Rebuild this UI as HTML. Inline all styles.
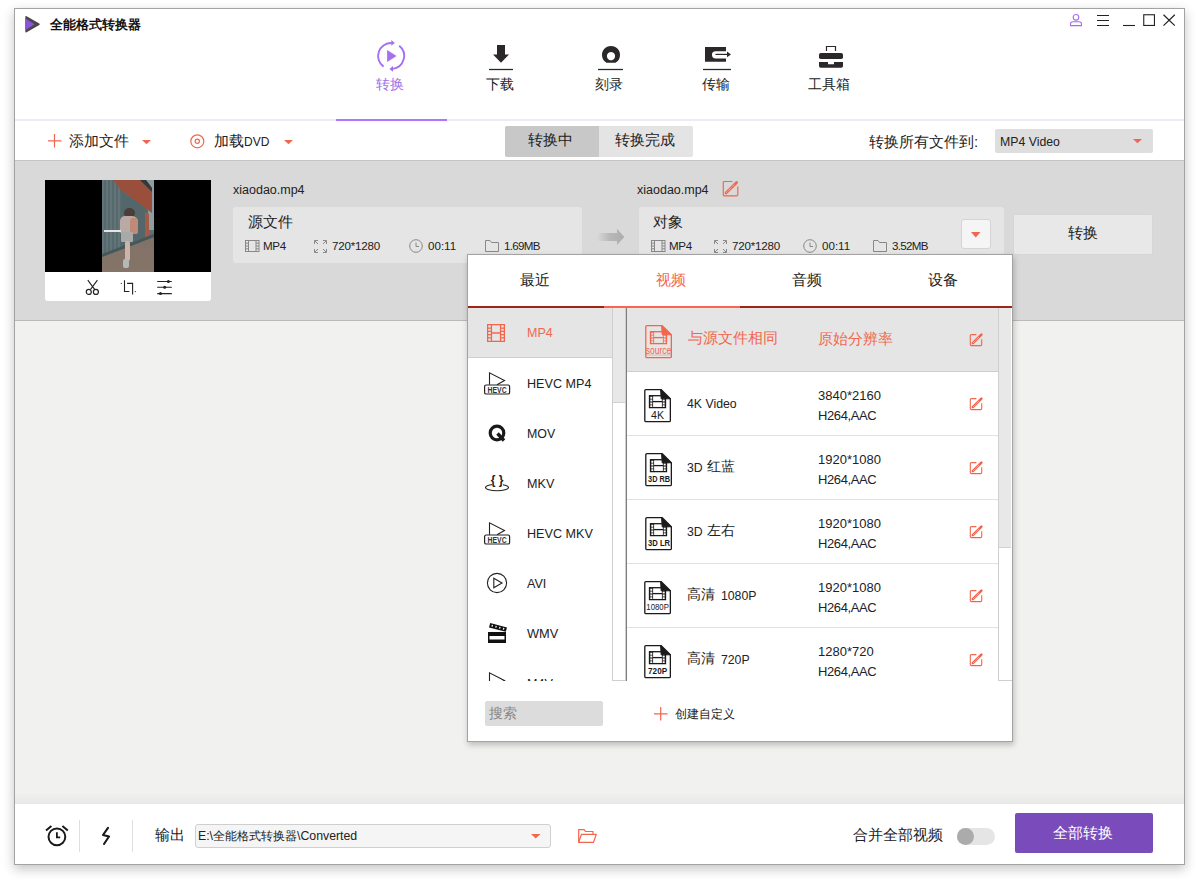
<!DOCTYPE html>
<html><head><meta charset="utf-8">
<style>
*{box-sizing:border-box;margin:0;padding:0}
html,body{width:1199px;height:888px;background:#fff;overflow:hidden;font-family:"Liberation Sans",sans-serif;color:#222}
.a{position:absolute}
.t{position:absolute;white-space:nowrap;line-height:1}
svg{position:absolute;overflow:visible}
</style></head><body>
<!-- window -->
<div class="a" style="left:14px;top:8px;width:1171px;height:857px;border:1px solid #a3a3a3;background:#fff;box-shadow:0 4px 11px rgba(0,0,0,.24)"></div>

<!-- title -->
<svg style="left:24px;top:15px" width="18" height="19" viewBox="0 0 18 19">
  <path d="M2.6 1.3 L15.3 8.6 Q16.3 9.3 15.3 10 L2.6 17.3 Q1.3 18 1.3 16.6 V2 Q1.3 0.6 2.6 1.3 Z" fill="#4a4748"/>
  <path d="M1.3 3.4 L10.6 9.3 L1.3 15.2 Z" fill="#8b54d8"/>
</svg>
<div class="t" style="left:50px;top:19px;font-size:12.5px;font-weight:bold;color:#111">全能格式转换器</div>

<!-- window controls -->
<svg style="left:1069px;top:13px" width="14" height="14" viewBox="0 0 14 14">
  <circle cx="7" cy="4.3" r="2.8" fill="none" stroke="#a56cf0" stroke-width="1.1"/>
  <path d="M1.5 12.6 V10.8 Q1.5 8.7 3.8 8.7 H10.2 Q12.5 8.7 12.5 10.8 V12.6 Z" fill="none" stroke="#a56cf0" stroke-width="1.1"/>
</svg>
<svg style="left:1096px;top:14px" width="14" height="13" viewBox="0 0 14 13">
  <path d="M1 1.5 H13 M1 6.5 H13 M1 11.5 H13" stroke="#222" stroke-width="1.1"/>
</svg>
<svg style="left:1122px;top:14px" width="14" height="13" viewBox="0 0 14 13">
  <path d="M1 11.5 H13" stroke="#222" stroke-width="1.1"/>
</svg>
<svg style="left:1143px;top:14px" width="13" height="13" viewBox="0 0 13 13">
  <rect x="0.75" y="0.75" width="10.7" height="10.7" fill="none" stroke="#222" stroke-width="1.1"/>
</svg>
<svg style="left:1162px;top:14px" width="14" height="13" viewBox="0 0 14 13">
  <path d="M1.5 0.8 L12.8 11.6 M12.8 0.8 L1.5 11.6" stroke="#222" stroke-width="1.2"/>
</svg>

<!-- nav icons -->
<svg style="left:376px;top:40px" width="30" height="33" viewBox="0 0 30 33">
  <path d="M7.6 26.6 A13 13 0 0 1 15.8 3" fill="none" stroke="#a56ff0" stroke-width="1.9"/>
  <path d="M15.3 0 L18.8 2.9 L15.3 5.8 Z" fill="#a56ff0"/>
  <path d="M23.2 5.8 A13 13 0 0 1 16.5 28.9" fill="none" stroke="#a56ff0" stroke-width="1.9"/>
  <path d="M17 26 L13.4 28.9 L17 31.8 Z" fill="#a56ff0"/>
  <path d="M11.1 10.1 L20.6 16.05 L11.1 22 Z" fill="#a56ff0"/>
</svg>
<div class="t" style="left:376px;top:77px;font-size:14px;color:#a06fe6">转换</div>

<svg style="left:489px;top:44px" width="25" height="27" viewBox="0 0 25 27">
  <path d="M8 1 H16 V10.4 H20 L12 18.7 L4 10.4 H8 Z" fill="#2b2829"/>
  <path d="M0 25.5 H24" stroke="#2b2829" stroke-width="1.3"/>
</svg>
<div class="t" style="left:486px;top:77px;font-size:14px;color:#222">下载</div>

<svg style="left:598px;top:44px" width="25" height="27" viewBox="0 0 25 27">
  <path d="M8.5 18.7 A9 9 0 1 1 17.5 18.7 Z M13 8 A4.1 4.1 0 1 0 13.01 8 Z" fill="#2b2829" fill-rule="evenodd"/>
  <path d="M0 25.5 H25" stroke="#2b2829" stroke-width="1.3"/>
</svg>
<div class="t" style="left:595px;top:77px;font-size:14px;color:#222">刻录</div>

<svg style="left:703px;top:44px" width="29" height="27" viewBox="0 0 29 27">
  <path d="M2 3 H23 V7.2 H12.6 A3.65 3.65 0 0 0 12.6 14.5 H23 V17.7 H2 Z" fill="#2b2829"/>
  <path d="M12.5 10.4 H25" stroke="#2b2829" stroke-width="1.2"/>
  <path d="M24 7.6 L28 10.4 L24 13.2 Z" fill="#2b2829"/>
  <path d="M0 25.5 H28" stroke="#2b2829" stroke-width="1.3"/>
</svg>
<div class="t" style="left:702px;top:77px;font-size:14px;color:#222">传输</div>

<svg style="left:818px;top:45px" width="26" height="24" viewBox="0 0 26 24">
  <path d="M8.5 6 V1.5 H17.5 V6" fill="none" stroke="#2b2829" stroke-width="1.2"/>
  <rect x="1" y="8" width="24" height="6" rx="1.8" fill="#2b2829"/>
  <path d="M1 17 H10 V19.3 H16 V17 H25 V21 A1.8 1.8 0 0 1 23.2 22.8 H2.8 A1.8 1.8 0 0 1 1 21 Z" fill="#2b2829"/>
</svg>
<div class="t" style="left:808px;top:77px;font-size:14px;color:#222">工具箱</div>
<!-- toolbar -->
<svg style="left:48px;top:134px" width="14" height="14" viewBox="0 0 14 14">
  <path d="M6.5 0 V13.5 M0 6.8 H13.5" stroke="#f2664e" stroke-width="1.2"/>
</svg>
<div class="t" style="left:69px;top:133px;font-size:15px;color:#222">添加文件</div>
<svg style="left:142px;top:140px" width="10" height="5" viewBox="0 0 10 5"><path d="M0 0 H9 L4.5 4.2 Z" fill="#f2664e"/></svg>
<svg style="left:190px;top:134px" width="15" height="15" viewBox="0 0 15 15">
  <circle cx="7.3" cy="7.3" r="6.5" fill="none" stroke="#f2664e" stroke-width="1.2"/>
  <circle cx="7.3" cy="7.3" r="2.1" fill="none" stroke="#f2664e" stroke-width="1.2"/>
</svg>
<div class="t" style="left:214px;top:133px;font-size:15px;color:#222">加载<span style="font-size:12px">DVD</span></div>
<svg style="left:284px;top:140px" width="10" height="5" viewBox="0 0 10 5"><path d="M0 0 H9 L4.5 4.2 Z" fill="#f2664e"/></svg>

<div class="a" style="left:505px;top:126px;width:188px;height:31px;border-radius:2px;background:#e4e4e4"></div>
<div class="a" style="left:505px;top:126px;width:94px;height:31px;border-radius:2px 0 0 2px;background:#c8c8c8"></div>
<div class="t" style="left:528px;top:133px;font-size:14.5px;color:#222">转换中</div>
<div class="t" style="left:615px;top:133px;font-size:14.5px;color:#222">转换完成</div>

<div class="t" style="left:869px;top:134px;font-size:15px;color:#222">转换所有文件到:</div>
<div class="a" style="left:995px;top:129px;width:158px;height:24px;border-radius:2px;background:#dedede"></div>
<div class="t" style="left:1000px;top:136px;font-size:12.3px;color:#222">MP4 Video</div>
<svg style="left:1133px;top:139px" width="10" height="5" viewBox="0 0 10 5"><path d="M0 0 H9 L4.5 4.2 Z" fill="#f2664e"/></svg>

<!-- nav lines -->
<div class="a" style="left:15px;top:119px;width:1169px;height:2px;background:#efe9f8"></div>
<div class="a" style="left:336px;top:119px;width:111px;height:2px;background:#ad76fb"></div>

<!-- file row -->
<div class="a" style="left:15px;top:160px;width:1169px;height:1px;background:#c4c4c4"></div>
<div class="a" style="left:15px;top:161px;width:1169px;height:159px;background:#d9d9d9"></div>
<div class="a" style="left:15px;top:320px;width:1169px;height:1px;background:#b9b9b9"></div>
<!-- thumbnail -->
<div class="a" style="left:45px;top:180px;width:166px;height:121px;background:#fff;border-radius:0 0 3px 3px"></div>
<div class="a" style="left:45px;top:180px;width:166px;height:92px;background:#000"></div>
<div class="a" style="left:102px;top:180px;width:52px;height:92px;overflow:hidden;background:#5e7074">
  <div class="a" style="left:0;top:0;width:52px;height:92px;background:#8d9ea2;clip-path:polygon(44px 0,52px 0,52px 50px,44px 50px)"></div>
  <div class="a" style="left:0;top:0;width:52px;height:92px;background:#53676a;clip-path:polygon(18px 10px,46px 30px,46px 62px,20px 70px)"></div>
  <div class="a" style="left:0;top:0;width:52px;height:92px;background:repeating-linear-gradient(90deg,#627478 0 2px,#56696c 2px 4px);clip-path:polygon(0 0,12px 0,20px 8px,20px 75px,0 78px)"></div>
  <div class="a" style="left:0;top:0;width:52px;height:92px;background:#9a4f3c;clip-path:polygon(11px 0,44px 0,50px 8px,50px 33px,19px 10px)"></div>
  <div class="a" style="left:0;top:0;width:52px;height:92px;background:#a45a45;clip-path:polygon(43px 32px,47px 34px,47px 60px,43px 61px)"></div>
  <div class="a" style="left:0;top:0;width:52px;height:92px;background:#2e3a3c;clip-path:polygon(38px 0,44px 0,50px 8px,50px 12px)"></div>
  <div class="a" style="left:0;top:0;width:52px;height:92px;background:linear-gradient(180deg,#7a6d66,#857468);clip-path:polygon(0 77px,52px 57px,52px 92px,0 92px)"></div>
  <div class="a" style="left:0;top:0;width:52px;height:92px;background:#44575a;clip-path:polygon(0 74px,52px 54px,52px 57px,0 77px)"></div>
  <div class="a" style="left:22px;top:28px;width:11px;height:10px;border-radius:50%;background:#4b3d38"></div>
  <div class="a" style="left:18px;top:36px;width:18px;height:18px;border-radius:5px 6px 3px 3px;background:#b9aaa5"></div>
  <div class="a" style="left:28px;top:38px;width:8px;height:16px;border-radius:3px;background:#c08a78"></div>
  <div class="a" style="left:19px;top:52px;width:12px;height:10px;border-radius:1px;background:#a8aaa8"></div>
  <div class="a" style="left:23px;top:61px;width:5px;height:20px;background:#cdb3a8;border-radius:2px"></div>
  <div class="a" style="left:21px;top:79px;width:6px;height:9px;background:#b5b8b8;border-radius:2px"></div>
  <div class="a" style="left:2px;top:50px;width:17px;height:2px;background:#e4e4e4"></div>
</div>
<svg style="left:84px;top:279px" width="17" height="17" viewBox="0 0 17 17">
  <path d="M3.8 1.2 L10.8 10.6 M13.4 1.2 L6.4 10.6" stroke="#222" stroke-width="1.1" fill="none"/>
  <circle cx="4.8" cy="12.9" r="2.5" fill="none" stroke="#222" stroke-width="1.2"/>
  <circle cx="11.9" cy="12.9" r="2.5" fill="none" stroke="#222" stroke-width="1.2"/>
</svg>
<svg style="left:120px;top:279px" width="17" height="17" viewBox="0 0 17 17">
  <path d="M4.5 1.2 V12.5 H9.4 M7.1 4.4 H12.6 V15.6" stroke="#222" stroke-width="1.1" fill="none"/>
  <rect x="0.8" y="3.9" width="1.1" height="1.1" fill="#444"/><rect x="14.8" y="12" width="1.1" height="1.1" fill="#444"/>
</svg>
<svg style="left:156px;top:279px" width="17" height="17" viewBox="0 0 17 17">
  <path d="M1.2 2.5 H15.8 M1.2 8.3 H15.8 M1.2 14.6 H15.8" stroke="#222" stroke-width="1.1"/>
  <circle cx="12.4" cy="2.5" r="1.5" fill="#222"/><circle cx="8.7" cy="8.3" r="1.5" fill="#222"/><circle cx="4.5" cy="14.6" r="1.5" fill="#222"/>
</svg>

<!-- source info -->
<div class="t" style="left:233px;top:184px;font-size:12.5px;color:#222">xiaodao.mp4</div>
<div class="a" style="left:233px;top:207px;width:349px;height:56px;border-radius:3px;background:#e5e5e5"></div>
<div class="t" style="left:248px;top:215px;font-size:14.5px;color:#222">源文件</div>
<svg style="left:245px;top:240px" width="15" height="12" viewBox="0 0 15 12">
  <rect x="0.5" y="0.5" width="13.5" height="11" fill="none" stroke="#888" stroke-width="1"/>
  <path d="M3.5 0.5 V11.5 M11 0.5 V11.5 M0.5 3.2 H3.5 M0.5 6 H3.5 M0.5 8.8 H3.5 M11 3.2 H14 M11 6 H14 M11 8.8 H14" stroke="#888" stroke-width="1"/>
</svg>
<div class="t" style="left:263px;top:240px;font-size:11.6px;color:#222;letter-spacing:-0.3px">MP4</div>
<svg style="left:314px;top:240px" width="13" height="13" viewBox="0 0 13 13">
  <path d="M0.5 4 V0.5 H4 M9 0.5 H12.5 V4 M12.5 9 V12.5 H9 M4 12.5 H0.5 V9 M1 1 L4 4 M12 1 L9 4 M12 12 L9 9 M1 12 L4 9" stroke="#888" stroke-width="1" fill="none"/>
</svg>
<div class="t" style="left:332px;top:240px;font-size:11.6px;color:#222;letter-spacing:-0.2px">720*1280</div>
<svg style="left:409px;top:239px" width="14" height="14" viewBox="0 0 14 14">
  <circle cx="7" cy="7" r="6.3" fill="none" stroke="#888" stroke-width="1"/>
  <path d="M7 3.5 V7.5 H10" stroke="#888" stroke-width="1" fill="none"/>
</svg>
<div class="t" style="left:428px;top:240px;font-size:11.6px;color:#222">00:11</div>
<svg style="left:485px;top:240px" width="14" height="12" viewBox="0 0 14 12">
  <path d="M0.5 11.5 V0.5 H5 L6.5 2.5 H13.5 V11.5 Z" fill="none" stroke="#888" stroke-width="1"/>
</svg>
<div class="t" style="left:504px;top:240px;font-size:11.6px;color:#222;letter-spacing:-0.7px">1.69MB</div>

<!-- arrow -->
<div class="a" style="left:597px;top:228px;width:28px;height:18px;background:linear-gradient(90deg,rgba(217,217,217,0),#b8b8b8 45%,#acacac);clip-path:polygon(0 5px,20px 5px,20px 0.8px,27.3px 9px,20px 17px,20px 13px,0 13px)"></div>

<!-- target info -->
<div class="t" style="left:637px;top:184px;font-size:12.5px;color:#222">xiaodao.mp4</div>
<svg style="left:722px;top:180px" width="17" height="17" viewBox="0 0 17 17">
  <path d="M10.5 1.5 H2.3 A1 1 0 0 0 1.3 2.5 V14.8 A1 1 0 0 0 2.3 15.8 H14.8 A1 1 0 0 0 15.8 14.8 V6.5" fill="none" stroke="#f2664e" stroke-width="1.2"/>
  <path d="M4 13 L14.6 2.4" stroke="#f2664e" stroke-width="2.8" stroke-linecap="round"/>
  <path d="M4.6 12.4 L12.4 4.6" stroke="#fff" stroke-width="0.8" stroke-dasharray="0.8 1"/>
</svg>
<div class="a" style="left:639px;top:207px;width:365px;height:56px;border-radius:3px;background:#e5e5e5"></div>
<div class="t" style="left:653px;top:215px;font-size:14.5px;color:#222">对象</div>
<svg style="left:651px;top:240px" width="15" height="12" viewBox="0 0 15 12">
  <rect x="0.5" y="0.5" width="13.5" height="11" fill="none" stroke="#888" stroke-width="1"/>
  <path d="M3.5 0.5 V11.5 M11 0.5 V11.5 M0.5 3.2 H3.5 M0.5 6 H3.5 M0.5 8.8 H3.5 M11 3.2 H14 M11 6 H14 M11 8.8 H14" stroke="#888" stroke-width="1"/>
</svg>
<div class="t" style="left:669px;top:240px;font-size:11.6px;color:#222;letter-spacing:-0.3px">MP4</div>
<svg style="left:714px;top:240px" width="13" height="13" viewBox="0 0 13 13">
  <path d="M0.5 4 V0.5 H4 M9 0.5 H12.5 V4 M12.5 9 V12.5 H9 M4 12.5 H0.5 V9 M1 1 L4 4 M12 1 L9 4 M12 12 L9 9 M1 12 L4 9" stroke="#888" stroke-width="1" fill="none"/>
</svg>
<div class="t" style="left:732px;top:240px;font-size:11.6px;color:#222;letter-spacing:-0.2px">720*1280</div>
<svg style="left:803px;top:239px" width="14" height="14" viewBox="0 0 14 14">
  <circle cx="7" cy="7" r="6.3" fill="none" stroke="#888" stroke-width="1"/>
  <path d="M7 3.5 V7.5 H10" stroke="#888" stroke-width="1" fill="none"/>
</svg>
<div class="t" style="left:822px;top:240px;font-size:11.6px;color:#222">00:11</div>
<svg style="left:873px;top:240px" width="14" height="12" viewBox="0 0 14 12">
  <path d="M0.5 11.5 V0.5 H5 L6.5 2.5 H13.5 V11.5 Z" fill="none" stroke="#888" stroke-width="1"/>
</svg>
<div class="t" style="left:892px;top:240px;font-size:11.6px;color:#222;letter-spacing:-0.7px">3.52MB</div>
<div class="a" style="left:961px;top:219px;width:30px;height:30px;border-radius:3px;background:#f5f5f5;border:1px solid #d4d4d4"></div>
<svg style="left:971px;top:232px" width="10" height="6" viewBox="0 0 10 6"><path d="M0 0 H9.5 L4.75 5.5 Z" fill="#f2664e"/></svg>

<div class="a" style="left:1013px;top:214px;width:140px;height:41px;border-radius:2px;background:#e8e8e8;border:1px solid #d6d6d6"></div>
<div class="t" style="left:1068px;top:226px;font-size:14.5px;color:#222">转换</div>
<!-- main area -->
<div class="a" style="left:15px;top:321px;width:1169px;height:483px;background:#f1f1f0"></div>
<div class="a" style="left:15px;top:792px;width:1169px;height:12px;background:linear-gradient(180deg,rgba(0,0,0,0),rgba(0,0,0,.04))"></div>

<!-- bottom bar -->
<svg style="left:45px;top:825px" width="24" height="22" viewBox="0 0 24 22">
  <circle cx="11.9" cy="11.8" r="8.4" fill="none" stroke="#1a1a1a" stroke-width="2"/>
  <path d="M11.9 7.2 V12.3 H15.2" fill="none" stroke="#1a1a1a" stroke-width="1.8"/>
  <path d="M1 5.6 L6.4 1 M22.8 5.6 L17.4 1" stroke="#1a1a1a" stroke-width="2"/>
</svg>
<div class="a" style="left:79px;top:820px;width:1px;height:32px;background:#dedede"></div>
<svg style="left:101px;top:827px" width="10" height="18" viewBox="0 0 10 18">
  <path d="M7 0.8 L2 8 L8 9.5 L3 17" fill="none" stroke="#1a1a1a" stroke-width="2.1" stroke-linecap="round" stroke-linejoin="round"/>
</svg>
<div class="a" style="left:132px;top:820px;width:1px;height:32px;background:#dedede"></div>
<div class="t" style="left:155px;top:827px;font-size:15px;color:#222">输出</div>
<div class="a" style="left:195px;top:824px;width:356px;height:24px;border-radius:3px;background:#f5f5f5;border:1px solid #cfcfcf"></div>
<div class="t" style="left:198px;top:830px;font-size:12.3px;color:#222">E:\全能格式转换器\Converted</div>
<svg style="left:531px;top:834px" width="10" height="5" viewBox="0 0 10 5"><path d="M0 0 H9.5 L4.75 4.5 Z" fill="#f2664e"/></svg>
<svg style="left:578px;top:829px" width="19" height="14" viewBox="0 0 19 14">
  <path d="M0.7 13.3 V0.7 H6 L7.5 2.5 H15 V5" fill="none" stroke="#f2664e" stroke-width="1.2"/>
  <path d="M0.7 13.3 L3.5 5.3 H18.3 L15.5 13.3 Z" fill="none" stroke="#f2664e" stroke-width="1.2" stroke-linejoin="round"/>
</svg>

<div class="t" style="left:853px;top:828px;font-size:14.6px;color:#222">合并全部视频</div>
<div class="a" style="left:957px;top:828px;width:38px;height:17px;border-radius:9px;background:#e5e5e5"></div>
<div class="a" style="left:957px;top:828px;width:17px;height:17px;border-radius:50%;background:#ababab"></div>
<div class="a" style="left:1015px;top:813px;width:138px;height:40px;border-radius:2px;background:#7a4bba"></div>
<div class="t" style="left:1053px;top:825px;font-size:15px;color:#fff">全部转换</div>
<!-- popup -->
<div class="a" style="left:467px;top:254px;width:546px;height:488px;background:#fff;border:1px solid #a3a3a3;box-shadow:1px 3px 6px rgba(0,0,0,.22)"></div>
<div class="t" style="left:520px;top:272px;font-size:15px;color:#222">最近</div>
<div class="t" style="left:656px;top:272px;font-size:15px;color:#f2664e">视频</div>
<div class="t" style="left:792px;top:272px;font-size:15px;color:#222">音频</div>
<div class="t" style="left:928px;top:272px;font-size:15px;color:#222">设备</div>
<div class="a" style="left:468px;top:306px;width:544px;height:2px;background:#9d2716"></div>
<div class="a" style="left:604px;top:306px;width:136px;height:2px;background:#fd6450"></div>

<!-- left list -->
<div class="a" style="left:468px;top:308px;width:144px;height:49px;background:#e5e5e5"></div>
<div class="a" style="left:468px;top:357px;width:144px;height:1px;background:#cfcfcf"></div>
<div class="a" style="left:612px;top:308px;width:1px;height:373px;background:#cfcfcf"></div>
<div class="a" style="left:613px;top:308px;width:12px;height:95px;background:#e8e8e8;border-bottom:1px solid #d2d2d2"></div>
<div class="a" style="left:625px;top:308px;width:1px;height:373px;background:#cfcfcf"></div>
<div class="a" style="left:612px;top:680px;width:14px;height:1px;background:#cfcfcf"></div>
<div class="a" style="left:626px;top:308px;width:1px;height:373px;background:#7d7d7d"></div>

<svg style="left:487px;top:324px" width="18" height="18" viewBox="0 0 17 17"><rect x="0.6" y="0.6" width="15.8" height="15.8" fill="none" stroke="#f2664e" stroke-width="1.2"/><path d="M4.2 0.6 V16.4 M12.8 0.6 V16.4 M4.2 8.5 H12.8 M0.6 3.8 H4.2 M0.6 6.9 H4.2 M0.6 10 H4.2 M0.6 13.1 H4.2 M12.8 3.8 H16.4 M12.8 6.9 H16.4 M12.8 10 H16.4 M12.8 13.1 H16.4" stroke="#f2664e" stroke-width="1.2"/></svg>
<div class="t" style="left:527px;top:327px;font-size:12.5px;color:#f2664e">MP4</div>
<svg style="left:484px;top:372px" width="27" height="24" viewBox="0 0 27 24"><path d="M5.5 12.8 V0.8 L20.5 8.6 L13 12.8" fill="none" stroke="#222" stroke-width="1.1"/><rect x="0.6" y="13" width="25" height="9" rx="1.6" fill="#fff" stroke="#222" stroke-width="1.2"/><text x="13.1" y="20.6" font-family="Liberation Sans" font-weight="bold" font-size="8.4" text-anchor="middle" fill="#333" textLength="19" lengthAdjust="spacingAndGlyphs">HEVC</text></svg>
<div class="t" style="left:527px;top:378px;font-size:12.6px;color:#222">HEVC MP4</div>
<svg style="left:488px;top:424px" width="20" height="20" viewBox="0 0 20 20">
  <circle cx="9" cy="9" r="6.8" fill="none" stroke="#1a1a1a" stroke-width="3.2"/>
  <path d="M9.5 9.5 L16 16.5" stroke="#1a1a1a" stroke-width="3.4"/>
</svg>
<div class="t" style="left:527px;top:428px;font-size:12.4px;color:#222">MOV</div>
<svg style="left:485px;top:474px" width="25" height="18" viewBox="0 0 25 18">
  <ellipse cx="12" cy="13.5" rx="11.5" ry="3.2" fill="none" stroke="#222" stroke-width="1.1"/>
  <rect x="7" y="0" width="11" height="13" fill="#fff"/>
  <text x="12.2" y="10.3" font-family="Liberation Sans" font-weight="bold" font-size="12" text-anchor="middle" fill="#222">{ }</text>
</svg>
<div class="t" style="left:527px;top:478px;font-size:12.6px;color:#222">MKV</div>
<svg style="left:484px;top:522px" width="27" height="24" viewBox="0 0 27 24"><path d="M5.5 12.8 V0.8 L20.5 8.6 L13 12.8" fill="none" stroke="#222" stroke-width="1.1"/><rect x="0.6" y="13" width="25" height="9" rx="1.6" fill="#fff" stroke="#222" stroke-width="1.2"/><text x="13.1" y="20.6" font-family="Liberation Sans" font-weight="bold" font-size="8.4" text-anchor="middle" fill="#333" textLength="19" lengthAdjust="spacingAndGlyphs">HEVC</text></svg>
<div class="t" style="left:527px;top:528px;font-size:12.6px;color:#222">HEVC MKV</div>
<svg style="left:486px;top:572px" width="22" height="22" viewBox="0 0 22 22">
  <circle cx="11" cy="11" r="9.6" fill="none" stroke="#222" stroke-width="1.1"/>
  <path d="M7.8 6.3 L16 11 L7.8 15.7 Z" fill="none" stroke="#222" stroke-width="1.1"/>
</svg>
<div class="t" style="left:527px;top:578px;font-size:12.6px;color:#222">AVI</div>
<svg style="left:488px;top:622px" width="20" height="22" viewBox="0 0 20 22">
  <path d="M1.6 3.2 L18.4 7.6" stroke="#111" stroke-width="4.6"/>
  <path d="M3.6 3.6 L4.8 3.9 M7.4 4.6 L8.6 4.9 M11.2 5.6 L12.4 5.9 M15 6.6 L16.2 6.9" stroke="#fff" stroke-width="2"/>
  <rect x="0" y="10" width="18" height="11" fill="#111"/>
  <rect x="1.5" y="14" width="15" height="3.5" fill="#fff"/>
</svg>
<div class="t" style="left:527px;top:628px;font-size:12.8px;color:#222">WMV</div>
<div class="a" style="left:468px;top:660px;width:144px;height:21px;overflow:hidden">
  <svg style="left:16px;top:12px" width="27" height="24" viewBox="0 0 27 24"><path d="M5.5 12.8 V0.8 L20.5 8.6 L13 12.8" fill="none" stroke="#222" stroke-width="1.1"/></svg>
  <div class="t" style="left:59px;top:18px;font-size:12.6px;color:#222">M4V</div>
</div>

<!-- right list -->
<div class="a" style="left:627px;top:308px;width:371px;height:63px;background:#e5e5e5"></div>
<div class="a" style="left:627px;top:371px;width:371px;height:1px;background:#cfcfcf"></div>
<div class="a" style="left:627px;top:435px;width:371px;height:1px;background:#e2e2e2"></div>
<div class="a" style="left:627px;top:499px;width:371px;height:1px;background:#e2e2e2"></div>
<div class="a" style="left:627px;top:563px;width:371px;height:1px;background:#e2e2e2"></div>
<div class="a" style="left:627px;top:627px;width:371px;height:1px;background:#e2e2e2"></div>
<div class="a" style="left:998px;top:308px;width:1px;height:373px;background:#cfcfcf"></div>
<div class="a" style="left:999px;top:308px;width:12px;height:240px;background:#e8e8e8;border-bottom:1px solid #d2d2d2"></div>
<div class="a" style="left:998px;top:680px;width:14px;height:1px;background:#cfcfcf"></div>
<div class="a" style="left:627px;top:680px;width:371px;height:1px;background:#fff"></div>

<svg style="left:645px;top:325px" width="28" height="34" viewBox="0 0 28 34"><path d="M2 0.65 H17.2 L26.35 9.8 V31.4 A1.2 1.2 0 0 1 25.15 32.6 H2 A1.2 1.2 0 0 1 0.8 31.4 V1.85 A1.2 1.2 0 0 1 2 0.65 Z" fill="none" stroke="#f2664e" stroke-width="1.3"/><rect x="5.5" y="6.7" width="16" height="11.9" fill="none" stroke="#f2664e" stroke-width="1.3"/><rect x="5.5" y="6.7" width="3.6" height="11.9" fill="#f2664e"/><rect x="17.9" y="6.7" width="3.6" height="11.9" fill="#f2664e"/><path d="M9 12.6 H18" stroke="#f2664e" stroke-width="1.3"/><path d="M6.3 7.7 h2 v2 h-2z M6.3 10.55 h2 v2 h-2z M6.3 13.4 h2 v2 h-2z M6.3 16.25 h2 v1.8 h-2z M18.7 7.7 h2 v2 h-2z M18.7 10.55 h2 v2 h-2z M18.7 13.4 h2 v2 h-2z M18.7 16.25 h2 v1.8 h-2z" fill="#e5e5e5"/><path d="M16.6 0.65 L26.35 9.8 H17.2 Z" fill="#f2664e" stroke="#f2664e" stroke-width="1" stroke-linejoin="round"/><text x="13.6" y="28.6" font-family="Liberation Sans" font-size="10" text-anchor="middle" fill="#f2664e" textLength="25.5" lengthAdjust="spacingAndGlyphs">source</text><path d="M1 30 H26" stroke="#f2664e" stroke-width="0.8" opacity=".5"/></svg>
<div class="t" style="left:688px;top:330px;font-size:15px;color:#f2664e">与源文件相同</div>
<div class="t" style="left:818px;top:331px;font-size:15px;color:#f2664e">原始分辨率</div>
<svg style="left:969px;top:333px" width="14" height="14" viewBox="0 0 14 14"><path d="M7.4 1.6 H2.3 A1 1 0 0 0 1.3 2.6 V11.6 A1 1 0 0 0 2.3 12.6 H11.7 A1 1 0 0 0 12.7 11.6 V6.3" fill="none" stroke="#f2664e" stroke-width="1.1"/><path d="M3.8 10.2 L12.4 1.6" stroke="#f2664e" stroke-width="2.6" stroke-linecap="round"/><path d="M4.4 9.6 L10.4 3.6" stroke="#fff" stroke-width="0.8" stroke-dasharray="0.8 0.9"/></svg>

<svg style="left:644px;top:389px" width="28" height="34" viewBox="0 0 28 34"><path d="M2 0.65 H17.2 L26.35 9.8 V31.4 A1.2 1.2 0 0 1 25.15 32.6 H2 A1.2 1.2 0 0 1 0.8 31.4 V1.85 A1.2 1.2 0 0 1 2 0.65 Z" fill="#fff" stroke="#1a1a1a" stroke-width="1.3"/><rect x="5.5" y="6.7" width="16" height="11.9" fill="none" stroke="#1a1a1a" stroke-width="1.3"/><rect x="5.5" y="6.7" width="3.6" height="11.9" fill="#1a1a1a"/><rect x="17.9" y="6.7" width="3.6" height="11.9" fill="#1a1a1a"/><path d="M9 12.6 H18" stroke="#1a1a1a" stroke-width="1.3"/><path d="M6.3 7.7 h2 v2 h-2z M6.3 10.55 h2 v2 h-2z M6.3 13.4 h2 v2 h-2z M6.3 16.25 h2 v1.8 h-2z M18.7 7.7 h2 v2 h-2z M18.7 10.55 h2 v2 h-2z M18.7 13.4 h2 v2 h-2z M18.7 16.25 h2 v1.8 h-2z" fill="#fff"/><path d="M16.6 0.65 L26.35 9.8 H17.2 Z" fill="#1a1a1a" stroke="#1a1a1a" stroke-width="1" stroke-linejoin="round"/><text x="13.6" y="30.3" font-family="Liberation Sans" font-size="11" font-weight="normal" text-anchor="middle" fill="#1a1a1a" textLength="13" lengthAdjust="spacingAndGlyphs">4K</text></svg>
<div class="t" style="left:687px;top:398px;font-size:12.3px;color:#222">4K Video</div>
<div class="t" style="left:818px;top:389px;font-size:13px;color:#222">3840*2160</div>
<div class="t" style="left:818px;top:409px;font-size:13px;color:#222;letter-spacing:-0.4px">H264,AAC</div>
<svg style="left:969px;top:397px" width="14" height="14" viewBox="0 0 14 14"><path d="M7.4 1.6 H2.3 A1 1 0 0 0 1.3 2.6 V11.6 A1 1 0 0 0 2.3 12.6 H11.7 A1 1 0 0 0 12.7 11.6 V6.3" fill="none" stroke="#f2664e" stroke-width="1.1"/><path d="M3.8 10.2 L12.4 1.6" stroke="#f2664e" stroke-width="2.6" stroke-linecap="round"/><path d="M4.4 9.6 L10.4 3.6" stroke="#fff" stroke-width="0.8" stroke-dasharray="0.8 0.9"/></svg>

<svg style="left:645px;top:453px" width="28" height="34" viewBox="0 0 28 34"><path d="M2 0.65 H17.2 L26.35 9.8 V31.4 A1.2 1.2 0 0 1 25.15 32.6 H2 A1.2 1.2 0 0 1 0.8 31.4 V1.85 A1.2 1.2 0 0 1 2 0.65 Z" fill="#fff" stroke="#1a1a1a" stroke-width="1.3"/><rect x="5.5" y="6.7" width="16" height="11.9" fill="none" stroke="#1a1a1a" stroke-width="1.3"/><rect x="5.5" y="6.7" width="3.6" height="11.9" fill="#1a1a1a"/><rect x="17.9" y="6.7" width="3.6" height="11.9" fill="#1a1a1a"/><path d="M9 12.6 H18" stroke="#1a1a1a" stroke-width="1.3"/><path d="M6.3 7.7 h2 v2 h-2z M6.3 10.55 h2 v2 h-2z M6.3 13.4 h2 v2 h-2z M6.3 16.25 h2 v1.8 h-2z M18.7 7.7 h2 v2 h-2z M18.7 10.55 h2 v2 h-2z M18.7 13.4 h2 v2 h-2z M18.7 16.25 h2 v1.8 h-2z" fill="#fff"/><path d="M16.6 0.65 L26.35 9.8 H17.2 Z" fill="#1a1a1a" stroke="#1a1a1a" stroke-width="1" stroke-linejoin="round"/><text x="14.1" y="29.3" font-family="Liberation Sans" font-size="8.6" font-weight="bold" text-anchor="middle" fill="#1a1a1a" textLength="22" lengthAdjust="spacingAndGlyphs">3D RB</text></svg>
<div class="t" style="left:687px;top:459px;font-size:14px;color:#222"><span style="font-size:12.3px;position:relative;top:1px">3D</span> 红蓝</div>
<div class="t" style="left:818px;top:453px;font-size:13px;color:#222">1920*1080</div>
<div class="t" style="left:818px;top:473px;font-size:13px;color:#222;letter-spacing:-0.4px">H264,AAC</div>
<svg style="left:969px;top:461px" width="14" height="14" viewBox="0 0 14 14"><path d="M7.4 1.6 H2.3 A1 1 0 0 0 1.3 2.6 V11.6 A1 1 0 0 0 2.3 12.6 H11.7 A1 1 0 0 0 12.7 11.6 V6.3" fill="none" stroke="#f2664e" stroke-width="1.1"/><path d="M3.8 10.2 L12.4 1.6" stroke="#f2664e" stroke-width="2.6" stroke-linecap="round"/><path d="M4.4 9.6 L10.4 3.6" stroke="#fff" stroke-width="0.8" stroke-dasharray="0.8 0.9"/></svg>

<svg style="left:645px;top:517px" width="28" height="34" viewBox="0 0 28 34"><path d="M2 0.65 H17.2 L26.35 9.8 V31.4 A1.2 1.2 0 0 1 25.15 32.6 H2 A1.2 1.2 0 0 1 0.8 31.4 V1.85 A1.2 1.2 0 0 1 2 0.65 Z" fill="#fff" stroke="#1a1a1a" stroke-width="1.3"/><rect x="5.5" y="6.7" width="16" height="11.9" fill="none" stroke="#1a1a1a" stroke-width="1.3"/><rect x="5.5" y="6.7" width="3.6" height="11.9" fill="#1a1a1a"/><rect x="17.9" y="6.7" width="3.6" height="11.9" fill="#1a1a1a"/><path d="M9 12.6 H18" stroke="#1a1a1a" stroke-width="1.3"/><path d="M6.3 7.7 h2 v2 h-2z M6.3 10.55 h2 v2 h-2z M6.3 13.4 h2 v2 h-2z M6.3 16.25 h2 v1.8 h-2z M18.7 7.7 h2 v2 h-2z M18.7 10.55 h2 v2 h-2z M18.7 13.4 h2 v2 h-2z M18.7 16.25 h2 v1.8 h-2z" fill="#fff"/><path d="M16.6 0.65 L26.35 9.8 H17.2 Z" fill="#1a1a1a" stroke="#1a1a1a" stroke-width="1" stroke-linejoin="round"/><text x="14.1" y="29.3" font-family="Liberation Sans" font-size="8.6" font-weight="bold" text-anchor="middle" fill="#1a1a1a" textLength="22" lengthAdjust="spacingAndGlyphs">3D LR</text></svg>
<div class="t" style="left:687px;top:523px;font-size:14px;color:#222"><span style="font-size:12.3px;position:relative;top:1px">3D</span> 左右</div>
<div class="t" style="left:818px;top:517px;font-size:13px;color:#222">1920*1080</div>
<div class="t" style="left:818px;top:537px;font-size:13px;color:#222;letter-spacing:-0.4px">H264,AAC</div>
<svg style="left:969px;top:525px" width="14" height="14" viewBox="0 0 14 14"><path d="M7.4 1.6 H2.3 A1 1 0 0 0 1.3 2.6 V11.6 A1 1 0 0 0 2.3 12.6 H11.7 A1 1 0 0 0 12.7 11.6 V6.3" fill="none" stroke="#f2664e" stroke-width="1.1"/><path d="M3.8 10.2 L12.4 1.6" stroke="#f2664e" stroke-width="2.6" stroke-linecap="round"/><path d="M4.4 9.6 L10.4 3.6" stroke="#fff" stroke-width="0.8" stroke-dasharray="0.8 0.9"/></svg>

<svg style="left:644px;top:581px" width="28" height="34" viewBox="0 0 28 34"><path d="M2 0.65 H17.2 L26.35 9.8 V31.4 A1.2 1.2 0 0 1 25.15 32.6 H2 A1.2 1.2 0 0 1 0.8 31.4 V1.85 A1.2 1.2 0 0 1 2 0.65 Z" fill="#fff" stroke="#1a1a1a" stroke-width="1.3"/><rect x="5.5" y="6.7" width="16" height="11.9" fill="none" stroke="#1a1a1a" stroke-width="1.3"/><rect x="5.5" y="6.7" width="3.6" height="11.9" fill="#1a1a1a"/><rect x="17.9" y="6.7" width="3.6" height="11.9" fill="#1a1a1a"/><path d="M9 12.6 H18" stroke="#1a1a1a" stroke-width="1.3"/><path d="M6.3 7.7 h2 v2 h-2z M6.3 10.55 h2 v2 h-2z M6.3 13.4 h2 v2 h-2z M6.3 16.25 h2 v1.8 h-2z M18.7 7.7 h2 v2 h-2z M18.7 10.55 h2 v2 h-2z M18.7 13.4 h2 v2 h-2z M18.7 16.25 h2 v1.8 h-2z" fill="#fff"/><path d="M16.6 0.65 L26.35 9.8 H17.2 Z" fill="#1a1a1a" stroke="#1a1a1a" stroke-width="1" stroke-linejoin="round"/><text x="13.6" y="29.3" font-family="Liberation Sans" font-size="8.6" font-weight="normal" text-anchor="middle" fill="#1a1a1a" textLength="22.5" lengthAdjust="spacingAndGlyphs">1080P</text></svg>
<div class="t" style="left:687px;top:587px;font-size:14px;color:#222">高清 <span style="font-size:12.3px;position:relative;top:1px;margin-left:2px">1080P</span></div>
<div class="t" style="left:818px;top:581px;font-size:13px;color:#222">1920*1080</div>
<div class="t" style="left:818px;top:601px;font-size:13px;color:#222;letter-spacing:-0.4px">H264,AAC</div>
<svg style="left:969px;top:589px" width="14" height="14" viewBox="0 0 14 14"><path d="M7.4 1.6 H2.3 A1 1 0 0 0 1.3 2.6 V11.6 A1 1 0 0 0 2.3 12.6 H11.7 A1 1 0 0 0 12.7 11.6 V6.3" fill="none" stroke="#f2664e" stroke-width="1.1"/><path d="M3.8 10.2 L12.4 1.6" stroke="#f2664e" stroke-width="2.6" stroke-linecap="round"/><path d="M4.4 9.6 L10.4 3.6" stroke="#fff" stroke-width="0.8" stroke-dasharray="0.8 0.9"/></svg>

<div class="a" style="left:627px;top:628px;width:371px;height:52px;overflow:hidden">
<svg style="left:17px;top:17px" width="28" height="34" viewBox="0 0 28 34"><path d="M2 0.65 H17.2 L26.35 9.8 V31.4 A1.2 1.2 0 0 1 25.15 32.6 H2 A1.2 1.2 0 0 1 0.8 31.4 V1.85 A1.2 1.2 0 0 1 2 0.65 Z" fill="#fff" stroke="#1a1a1a" stroke-width="1.3"/><rect x="5.5" y="6.7" width="16" height="11.9" fill="none" stroke="#1a1a1a" stroke-width="1.3"/><rect x="5.5" y="6.7" width="3.6" height="11.9" fill="#1a1a1a"/><rect x="17.9" y="6.7" width="3.6" height="11.9" fill="#1a1a1a"/><path d="M9 12.6 H18" stroke="#1a1a1a" stroke-width="1.3"/><path d="M6.3 7.7 h2 v2 h-2z M6.3 10.55 h2 v2 h-2z M6.3 13.4 h2 v2 h-2z M6.3 16.25 h2 v1.8 h-2z M18.7 7.7 h2 v2 h-2z M18.7 10.55 h2 v2 h-2z M18.7 13.4 h2 v2 h-2z M18.7 16.25 h2 v1.8 h-2z" fill="#fff"/><path d="M16.6 0.65 L26.35 9.8 H17.2 Z" fill="#1a1a1a" stroke="#1a1a1a" stroke-width="1" stroke-linejoin="round"/><text x="13.6" y="29.3" font-family="Liberation Sans" font-size="8.6" font-weight="bold" text-anchor="middle" fill="#1a1a1a" textLength="19" lengthAdjust="spacingAndGlyphs">720P</text></svg>
<div class="t" style="left:60px;top:23px;font-size:14px;color:#222">高清 <span style="font-size:12.3px;position:relative;top:1px;margin-left:2px">720P</span></div>
<div class="t" style="left:191px;top:17px;font-size:13px;color:#222">1280*720</div>
<div class="t" style="left:191px;top:37px;font-size:13px;color:#222;letter-spacing:-0.4px">H264,AAC</div>
<svg style="left:342px;top:25px" width="14" height="14" viewBox="0 0 14 14"><path d="M7.4 1.6 H2.3 A1 1 0 0 0 1.3 2.6 V11.6 A1 1 0 0 0 2.3 12.6 H11.7 A1 1 0 0 0 12.7 11.6 V6.3" fill="none" stroke="#f2664e" stroke-width="1.1"/><path d="M3.8 10.2 L12.4 1.6" stroke="#f2664e" stroke-width="2.6" stroke-linecap="round"/><path d="M4.4 9.6 L10.4 3.6" stroke="#fff" stroke-width="0.8" stroke-dasharray="0.8 0.9"/></svg>
</div>

<!-- popup footer -->
<div class="a" style="left:485px;top:701px;width:118px;height:25px;border-radius:2px;background:#dcdcdc"></div>
<div class="t" style="left:489px;top:706px;font-size:14px;color:#888">搜索</div>
<svg style="left:654px;top:707px" width="14" height="14" viewBox="0 0 14 14">
  <path d="M6.7 0 V13.5 M0 6.8 H13.5" stroke="#f2664e" stroke-width="1.2"/>
</svg>
<div class="t" style="left:675px;top:708px;font-size:11.6px;color:#222">创建自定义</div>
</body></html>
